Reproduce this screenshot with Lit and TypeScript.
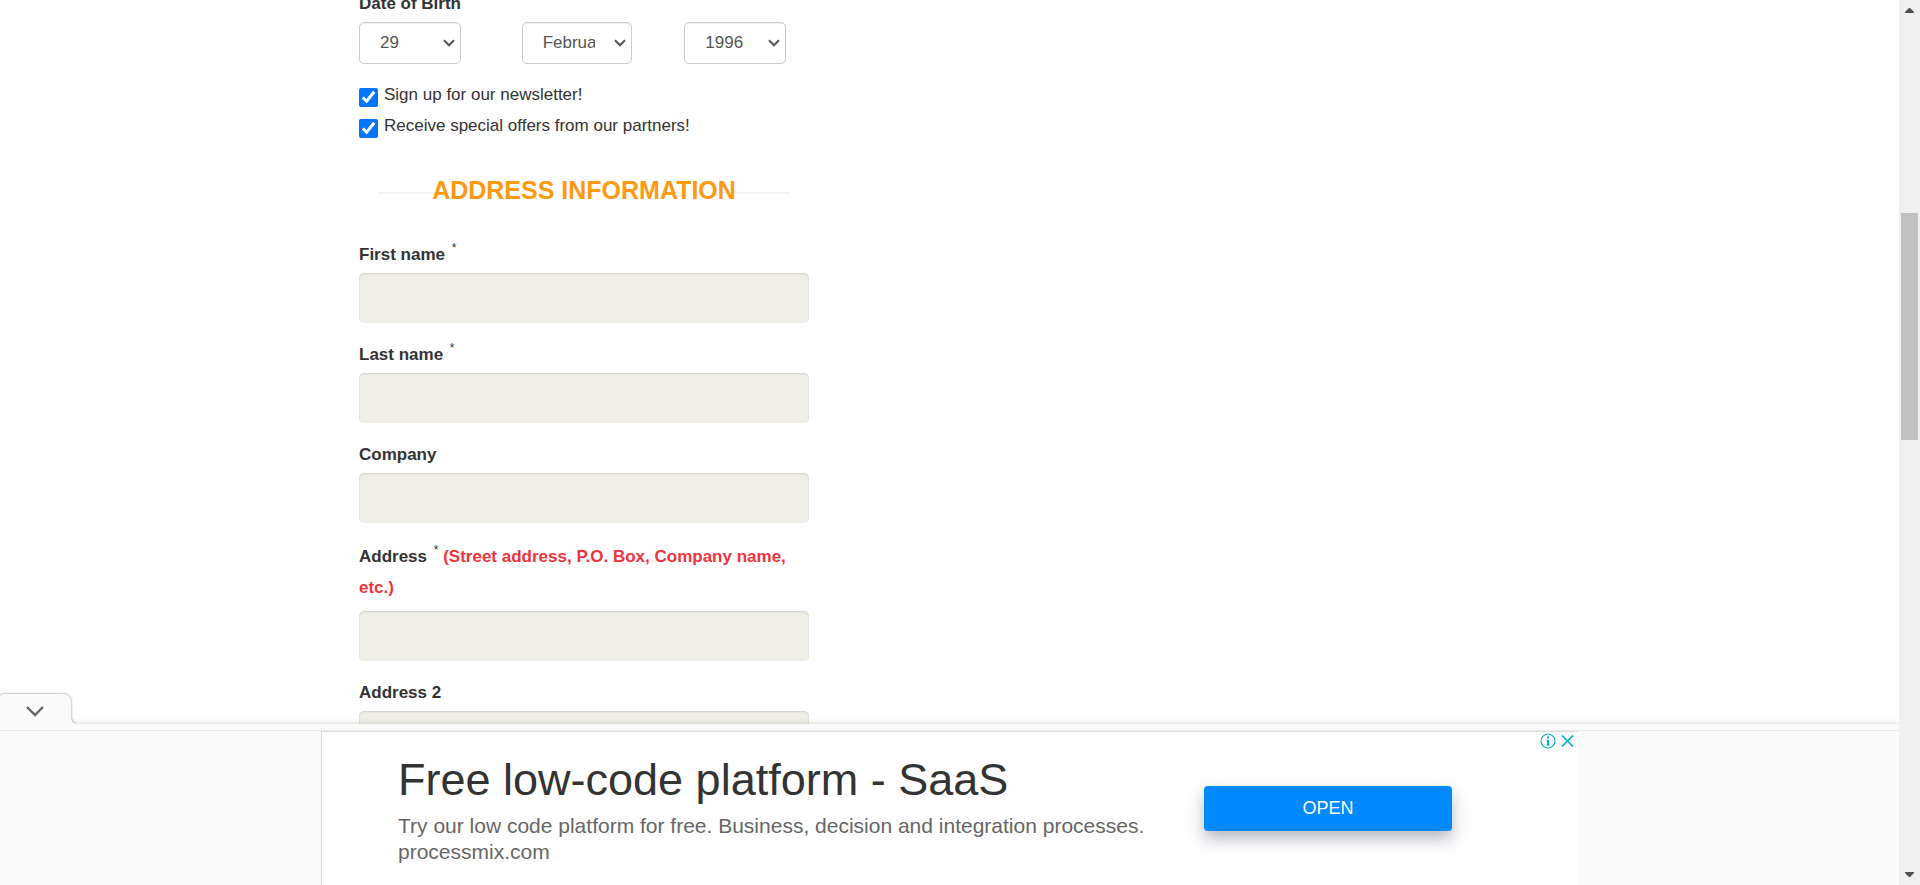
import { LitElement, html, css, svg, nothing } from "lit";
import { customElement, property } from "lit/decorators.js";

const chevron = (cls: string) => html`
  <svg class=${cls} viewBox="0 0 12 8" aria-hidden="true">
    ${svg`<path d="M1 1.2 6 6.3 11 1.2" fill="none" stroke="currentColor" stroke-width="2"/>`}
  </svg>`;

@customElement("date-select")
class DateSelect extends LitElement {
  @property() label = "";
  @property({ type: Array }) options: string[] = [];
  @property({ type: Boolean, reflect: true }) wide = false;

  static styles = css`
    :host {
      display: grid;
      width: 102px;
      color: #555;
    }
    :host([wide]) {
      width: 110px;
    }
    .select,
    .arrow {
      grid-area: 1 / 1;
    }
    .select {
      appearance: none;
      box-sizing: border-box;
      width: 100%;
      height: 42px;
      padding: 0 36px 0 20px;
      border: 1px solid #ccc;
      border-radius: 5px;
      background: #fff;
      box-shadow: inset 0 1px 1px rgba(0, 0, 0, 0.075);
      color: inherit;
      font: 17px/24px "Liberation Sans", Arial, sans-serif;
      text-overflow: clip;
    }
    .arrow {
      width: 12px;
      height: 8px;
      align-self: center;
      justify-self: end;
      margin-right: 6px;
      pointer-events: none;
    }
  `;

  render() {
    return html`
      <select class="select" aria-label=${this.label}>
        ${this.options.map((o) => html`<option>${o}</option>`)}
      </select>
      ${chevron("arrow")}
    `;
  }
}

@customElement("text-field")
class TextField extends LitElement {
  @property() label = "";
  @property() hint = "";
  @property({ type: Boolean }) required = false;

  static styles = css`
    :host {
      display: flex;
      flex-direction: column;
      gap: 3px;
    }
    .label {
      font-weight: 700;
      line-height: 31px;
    }
    .hinted {
      padding: 2px 0 5px;
    }
    .star {
      margin-left: 2px;
      font-size: 12px;
      font-weight: 400;
      line-height: 0;
      vertical-align: 8px;
    }
    .hint {
      color: #f13340;
    }
    .input {
      box-sizing: border-box;
      width: 100%;
      height: 50px;
      padding: 8px 16px;
      border: 0;
      border-radius: 5px;
      background: #efefe7;
      box-shadow: inset 0 1px 2px rgba(0, 0, 0, 0.13);
      color: #555;
      font: inherit;
    }
  `;

  render() {
    return html`
      <label class="label ${this.hint ? "hinted" : ""}" for="field"
        >${this.label}
        ${this.required ? html`<sup class="star">*</sup>` : nothing}
        ${this.hint ? html`<span class="hint">${this.hint}</span>` : nothing}</label
      >
      <input class="input" id="field" type="text" />
    `;
  }
}

@customElement("ad-banner")
class AdBanner extends LitElement {
  static styles = css`
    :host {
      display: block;
      position: relative;
      background: #fafafa;
      box-shadow: 0 0 6px rgba(0, 0, 0, 0.18);
    }
    .tab {
      position: absolute;
      left: 0;
      bottom: 100%;
      width: 82px;
      height: 31px;
      padding: 0;
      border: 0;
      background: none;
    }
    .tab-shape {
      display: block;
      width: 82px;
      height: 31px;
      overflow: visible;
      filter: drop-shadow(0 0 1px rgba(0, 0, 0, 0.5));
      clip-path: inset(-4px -4px 0 0);
    }
    .strip {
      height: 6px;
      border-bottom: 1px solid #e9e9e9;
      background: #fafafa;
    }
    .ad {
      position: relative;
      box-sizing: border-box;
      display: flex;
      align-items: flex-start;
      justify-content: space-between;
      max-width: 1257px;
      min-height: 154px;
      margin: 0 auto;
      padding: 0 126px 0 76px;
      border-left: 1px solid #ddd;
      border-top: 1px solid #ddd;
      background: #fff;
    }
    .copy {
      padding-top: 22px;
      color: #666;
      font-size: 21px;
      line-height: 26px;
    }
    .headline {
      margin: 0 0 7px;
      color: #333;
      font-size: 45px;
      font-weight: 400;
      line-height: 52px;
    }
    .line {
      display: block;
      color: inherit;
      text-decoration: none;
    }
    .open {
      width: 248px;
      height: 45px;
      margin-top: 54px;
      padding: 0 0 2px;
      border: 0;
      border-radius: 4px;
      background: #0088ff;
      box-shadow: 0 8px 16px rgba(20, 25, 60, 0.3);
      color: #fff;
      font: 18px/24px "Liberation Sans", Arial, sans-serif;
    }
    .choices {
      position: absolute;
      top: 1px;
      right: 4px;
      display: flex;
      gap: 5px;
      color: #00aecd;
    }
    .choice {
      display: block;
      padding: 0;
      border: 0;
      background: none;
      color: inherit;
    }
    .icon {
      display: block;
      height: 16px;
    }
    .info {
      width: 16px;
    }
    .close {
      width: 13px;
    }
  `;

  render() {
    return html`
      <button class="tab" aria-label="Hide advertisement">
        <svg class="tab-shape" viewBox="0 0 82 31">
          <path d="M0 3Q1 1 4 1H63Q71 1 71 9V23Q71 30 77 31H0Z" fill="#fafafa" />
          <path
            d="M27 14 35 22 43 14"
            fill="none"
            stroke="#666"
            stroke-width="2.4"
          />
        </svg>
      </button>
      <div class="strip"></div>
      <section class="ad" aria-label="Advertisement">
        <div class="copy">
          <h2 class="headline">Free low-code platform - SaaS</h2>
          <span class="line"
            >Try our low code platform for free. Business, decision and
            integration processes.</span
          >
          <a class="line" href="#">processmix.com</a>
        </div>
        <button class="open">OPEN</button>
        <div class="choices">
          <button class="choice" aria-label="About this ad">
            <svg class="icon info" viewBox="0 0 16 16">
              <circle cx="8" cy="8" r="7" fill="none" stroke="currentColor" stroke-width="1.1" />
              <path d="M7 3.6h2v2H7zM6.5 6.8H9v5.4h.5v.6h-3v-.6H7V7.4h-.5z" fill="currentColor" />
            </svg>
          </button>
          <button class="choice" aria-label="Close ad">
            <svg class="icon close" viewBox="0 0 13 16">
              <path
                d="M1 2.5 12 13.5M12 2.5 1 13.5"
                fill="none"
                stroke="currentColor"
                stroke-width="1.7"
              />
            </svg>
          </button>
        </div>
      </section>
    `;
  }
}

@customElement("scroll-rail")
class ScrollRail extends LitElement {
  static styles = css`
    :host {
      position: relative;
      z-index: 1;
      display: grid;
      grid-template-rows: 21px 192fr 227fr 424fr 21px;
      justify-items: center;
      align-items: center;
      width: 21px;
      background: #f0f0f0;
    }
    .arrow {
      width: 9px;
      height: 5px;
      fill: #505050;
    }
    .thumb {
      grid-row: 3;
      align-self: stretch;
      width: 17px;
      background: #c1c1c1;
    }
    .down {
      grid-row: 5;
    }
  `;

  render() {
    return html`
      <svg class="arrow" viewBox="0 0 9 5"><path d="M0 5V4L4 0H5L9 4V5Z" /></svg>
      <div class="thumb"></div>
      <svg class="arrow down" viewBox="0 0 9 5"><path d="M0 0V1L4 5H5L9 1V0Z" /></svg>
    `;
  }
}

@customElement("app-root")
class AppRoot extends LitElement {
  static styles = css`
    :host {
      display: flex;
      height: 100vh;
      overflow: hidden;
      background: #fff;
      color: #333;
      font: 17px/31px "Liberation Sans", Arial, sans-serif;
    }
    .page {
      flex: 1;
      min-width: 0;
      display: flex;
      flex-direction: column;
    }
    .view {
      flex: 1;
      min-height: 0;
      overflow: hidden;
    }
    .container {
      max-width: 1181px;
      margin: -12px auto 0;
    }
    .form {
      max-width: 450px;
    }
    .legend {
      padding: 0;
      font-weight: 700;
    }
    .group {
      min-width: 0;
      margin: 0 0 15px;
      padding: 0;
      border: 0;
    }
    .dates {
      display: grid;
      grid-template-columns: repeat(3, 1fr);
      margin: 3px -38px 0 0;
    }
    .check {
      display: flex;
      align-items: flex-start;
      gap: 6px;
    }
    .box {
      width: 19px;
      height: 19px;
      margin: 9px 0 0;
    }
    .title {
      display: flex;
      align-items: center;
      margin: 32px 19px 31px;
      color: #ff9912;
      font-size: 25px;
      line-height: 35px;
      white-space: nowrap;
    }
    .title::before,
    .title::after {
      content: "";
      flex: 1;
      height: 2px;
      margin-top: 5px;
      background: #f3f3f3;
    }
    .fields {
      display: flex;
      flex-direction: column;
      gap: 16px;
    }
  `;

  render() {
    return html`
      <div class="page">
        <main class="view">
          <div class="container">
            <form class="form">
              <fieldset class="group">
                <legend class="legend">Date of Birth</legend>
                <div class="dates">
                  <date-select label="Day" .options=${["29"]}></date-select>
                  <date-select label="Month" wide .options=${["February"]}></date-select>
                  <date-select label="Year" .options=${["1996"]}></date-select>
                </div>
              </fieldset>
              <label class="check">
                <input class="box" type="checkbox" checked />
                <span>Sign up for our newsletter!</span>
              </label>
              <label class="check">
                <input class="box" type="checkbox" checked />
                <span>Receive special offers from our partners!</span>
              </label>
              <h3 class="title">ADDRESS INFORMATION</h3>
              <div class="fields">
                <text-field label="First name" required></text-field>
                <text-field label="Last name" required></text-field>
                <text-field label="Company"></text-field>
                <text-field
                  label="Address"
                  required
                  hint="(Street address, P.O. Box, Company name, etc.)"
                ></text-field>
                <text-field label="Address 2"></text-field>
              </div>
            </form>
          </div>
        </main>
        <ad-banner></ad-banner>
      </div>
      <scroll-rail></scroll-rail>
    `;
  }
}
